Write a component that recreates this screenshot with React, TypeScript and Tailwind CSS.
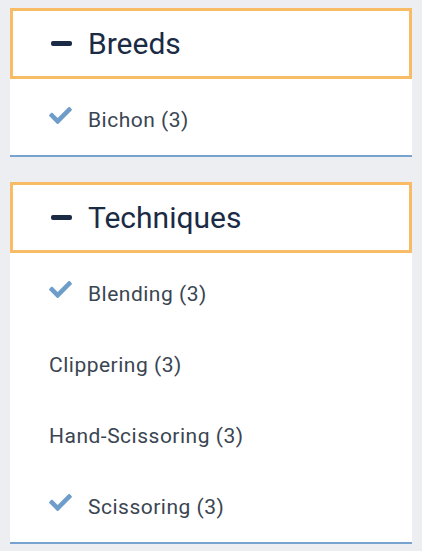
import React from "react";

type Item = { label: string; count: number; checked?: boolean };

const groups: { title: string; items: Item[] }[] = [
  { title: "Breeds", items: [{ label: "Bichon", count: 3, checked: true }] },
  {
    title: "Techniques",
    items: [
      { label: "Blending", count: 3, checked: true },
      { label: "Clippering", count: 3 },
      { label: "Hand-Scissoring", count: 3 },
      { label: "Scissoring", count: 3, checked: true },
    ],
  },
];

function Check() {
  return (
    <svg viewBox="0 65 512 382" className="w-[23px] h-[17px] shrink-0" fill="#6f9dca">
      <path d="M173.898 439.404l-166.4-166.4c-9.997-9.997-9.997-26.206 0-36.204l36.203-36.204c9.997-9.998 26.207-9.998 36.204 0L192 312.69 432.095 72.596c9.997-9.997 26.207-9.997 36.204 0l36.203 36.204c9.997 9.997 9.997 26.206 0 36.204l-294.4 294.401c-9.998 9.997-26.207 9.997-36.204-.001z" />
    </svg>
  );
}

export default function App() {
  return (
    <div
      className="min-h-[551px] w-full bg-[#eceef1] px-[10px] pt-[8px] flex flex-col gap-[25px]"
      style={{ fontFamily: "Roboto, 'Liberation Sans', sans-serif" }}
    >
      {groups.map((g) => (
        <div key={g.title} className="bg-white border-b-2 border-[#78a3cf]">
          <div className="h-[71px] border-[3px] border-[#f9bc66] flex items-center pl-[38px]">
            <span className="block w-[21px] h-[5px] rounded-[2px] bg-[#1b2b45]" />
            <span className="ml-[16px] text-[30px] leading-none text-[#1b2b45]">{g.title}</span>
          </div>
          <ul className="pt-[5px]">
            {g.items.map((it) => (
              <li key={it.label} className="h-[71px] flex items-center pl-[39px] text-[21px] tracking-[0.5px] text-[#3a4552]">
                {it.checked && (
                  <span className="mr-[16px] -mt-[8px] flex">
                    <Check />
                  </span>
                )}
                <span className="pt-[2px]">
                  {it.label} ({it.count})
                </span>
              </li>
            ))}
          </ul>
        </div>
      ))}
    </div>
  );
}
